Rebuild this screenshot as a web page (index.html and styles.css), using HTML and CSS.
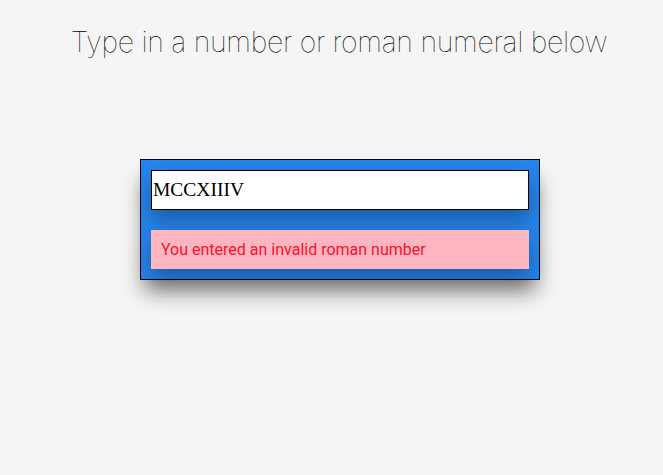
FILE: index.html
```html
<!DOCTYPE html>
<html>
<head>
<meta charset="utf-8">
<link rel="stylesheet" href="styles.css">
</head>
<body>
<h1 class="title">Type in a number or roman numeral below</h1>
<div class="card">
  <input class="field" type="text" value="MCCXIIIV">
  <div class="error">You entered an invalid roman number</div>
</div>
</body>
</html>
```
FILE: styles.css
```css
html, body {
  margin: 0;
  padding: 0;
  background: #f5f5f5;
}
body {
  width: 663px;
  height: 475px;
  font-family: Inter, "Noto Sans", sans-serif;
}
.title {
  margin: 0;
  padding-top: 22px;
  padding-left: 15px;
  text-align: center;
  font-family: Inter, sans-serif;
  font-weight: 100;
  font-size: 28.5px;
  line-height: 40px;
  color: #000;
  letter-spacing: -0.3px;
}
.card {
  width: 378px;
  margin: 97px 0 0 140px;
  padding: 10px;
  border: 1px solid #000;
  background: #2684ec;
  box-shadow: 0 16px 20px -4px rgba(0,0,0,0.45);
  display: flex;
  flex-direction: column;
  gap: 20px;
}
.field {
  box-sizing: border-box;
  width: 378px;
  height: 40px;
  margin: 0;
  padding: 0 1px;
  border: 1px solid #000;
  background: #fff;
  font-family: "Liberation Serif", serif;
  font-size: 19.5px;
  color: #000;
  box-shadow: 0 10px 20px rgba(0,0,0,0.3);
  outline: none;
}
.error {
  height: 39px;
  box-sizing: border-box;
  padding: 0 10px;
  display: flex;
  align-items: center;
  background: #ffb6c1;
  color: #ff0f30;
  font-family: Roboto, sans-serif;
  font-size: 16px;
  box-shadow: 0 10px 20px rgba(0,0,0,0.3);
}
```
